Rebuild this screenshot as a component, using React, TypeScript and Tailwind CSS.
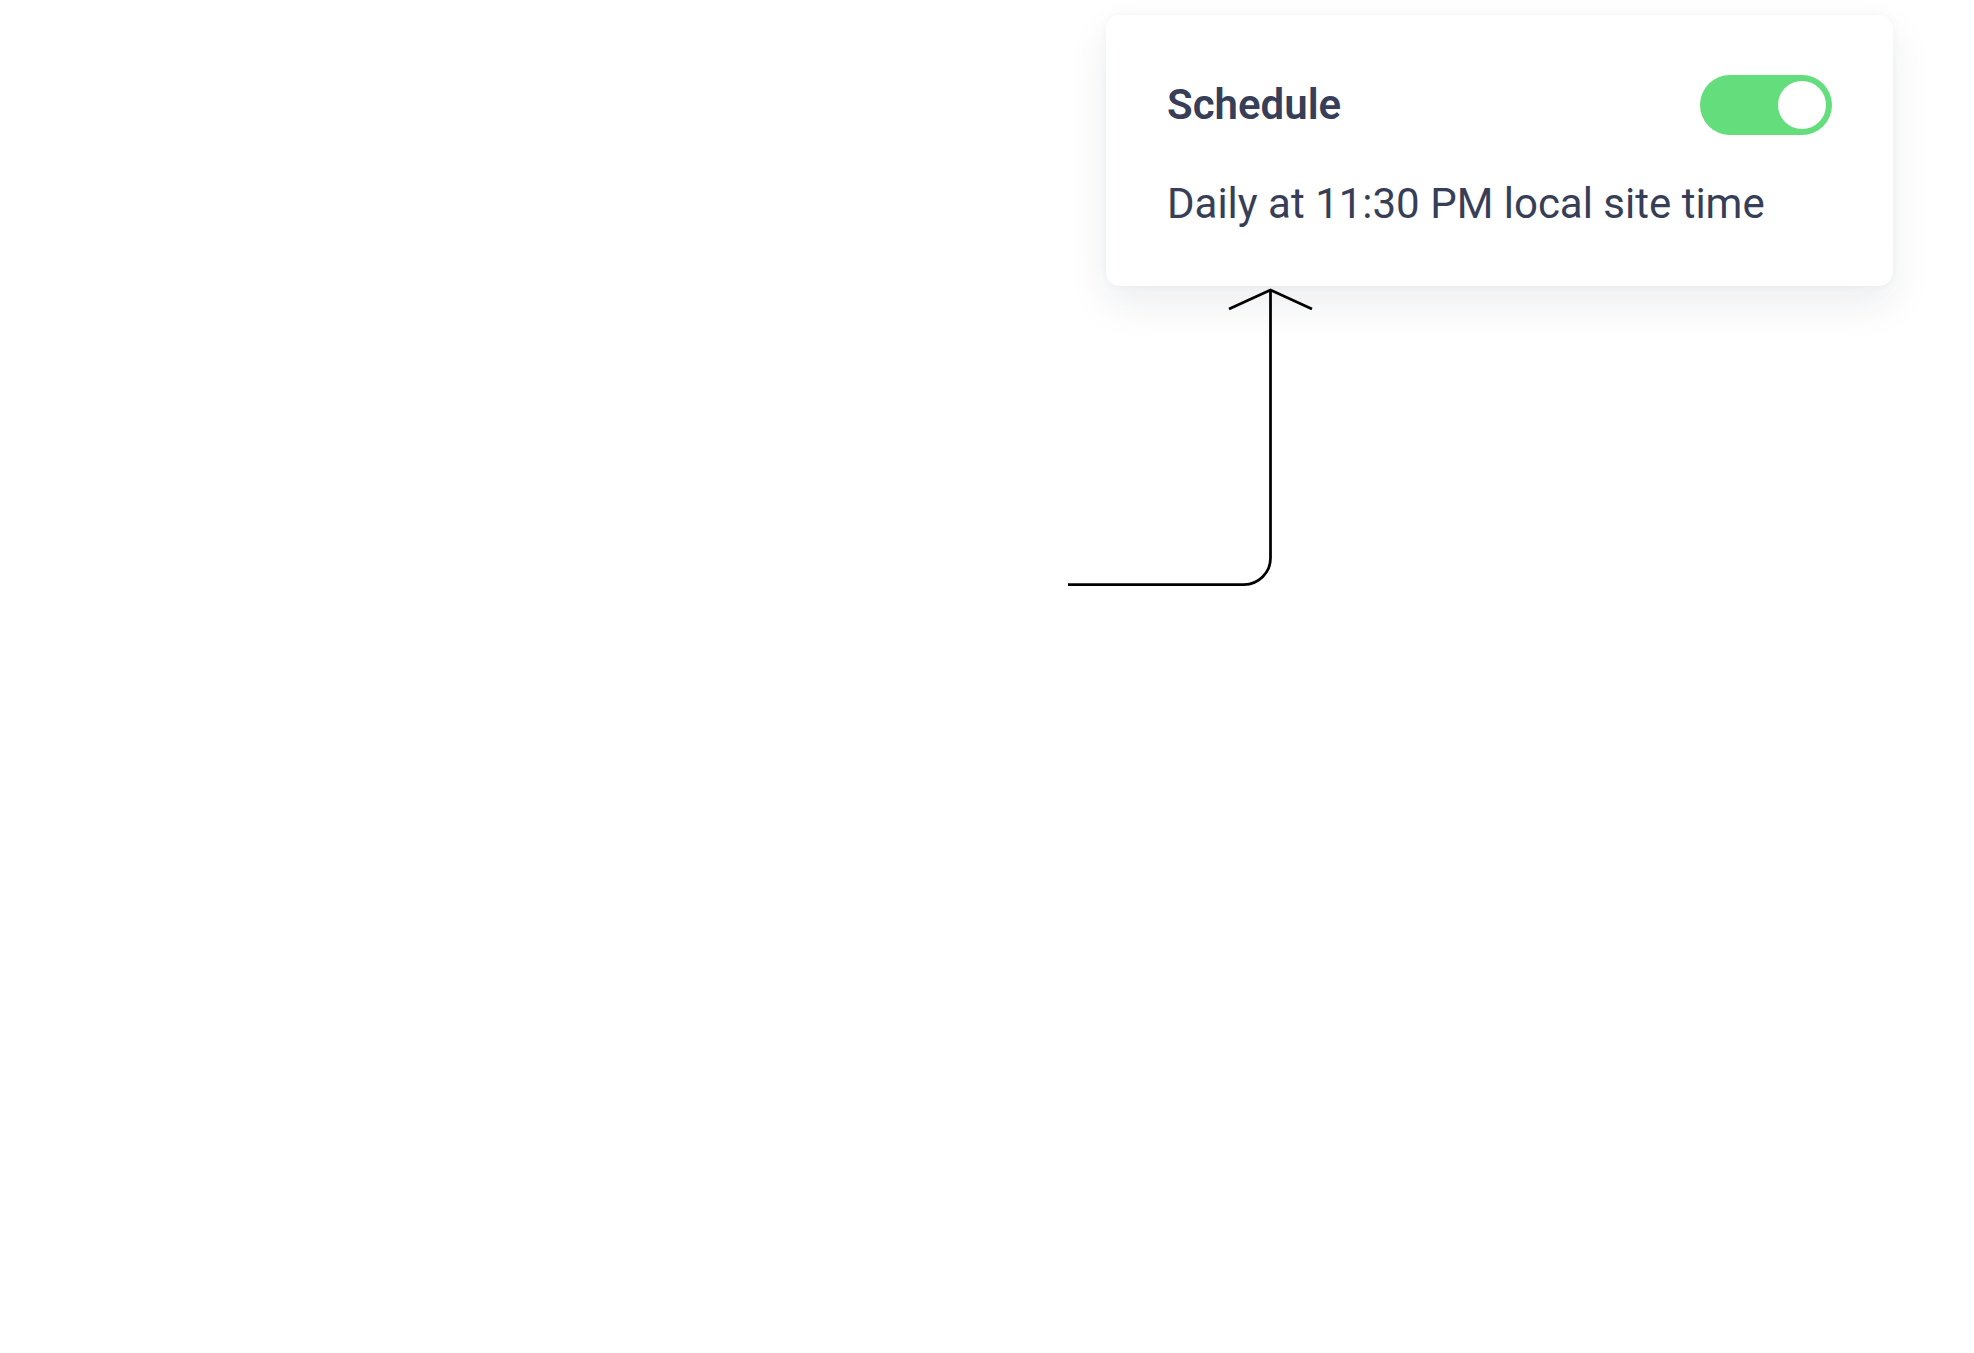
import { useState } from "react";

const Toggle = ({ on, onChange }: { on: boolean; onChange: (v: boolean) => void }) => {
  return (
    <button
      type="button"
      role="switch"
      aria-checked={on}
      onClick={() => onChange(!on)}
      className={`flex h-[60px] w-[132px] items-center rounded-full p-[6px] transition-colors ${
        on ? "justify-end bg-[#64de7d]" : "justify-start bg-[#d5d9e0]"
      }`}
    >
      <span className="block h-[48px] w-[48px] rounded-full bg-white" />
    </button>
  );
};

const ScheduleCard = () => {
  const [enabled, setEnabled] = useState(true);

  return (
    <div className="w-[787px] rounded-[14px] bg-white px-[61px] pt-[60px] pb-[58px] shadow-[0_18px_40px_rgba(30,40,60,0.08),0_0_8px_rgba(30,40,60,0.04)]">
      <div className="flex items-center justify-between">
        <h3 className="text-[42px] font-semibold leading-[48px] text-[#373e58]">Schedule</h3>
        <Toggle on={enabled} onChange={setEnabled} />
      </div>
      <p className="mt-[45px] text-[42px] leading-[48px] text-[#373e58]">Daily at 11:30 PM local site time</p>
    </div>
  );
};

// callout line pointing up at the card
const Pointer = () => (
  <svg className="pointer-events-none absolute left-0 top-0" width={1974} height={700} fill="none">
    <path d="M1068 584.5 H1244 A26.5 26.5 0 0 0 1270.5 558 V291" stroke="#000" strokeWidth={2.75} />
    <path d="M1229 309 L1270.5 290 L1312 309" stroke="#000" strokeWidth={2.75} strokeLinejoin="miter" />
  </svg>
);

export default function App() {
  return (
    <div className="relative min-h-screen w-full bg-white font-['Roboto',_'Liberation_Sans',_sans-serif]">
      <div className="flex justify-end pt-[15px] pr-[81px]">
        <ScheduleCard />
      </div>
      <Pointer />
    </div>
  );
}
